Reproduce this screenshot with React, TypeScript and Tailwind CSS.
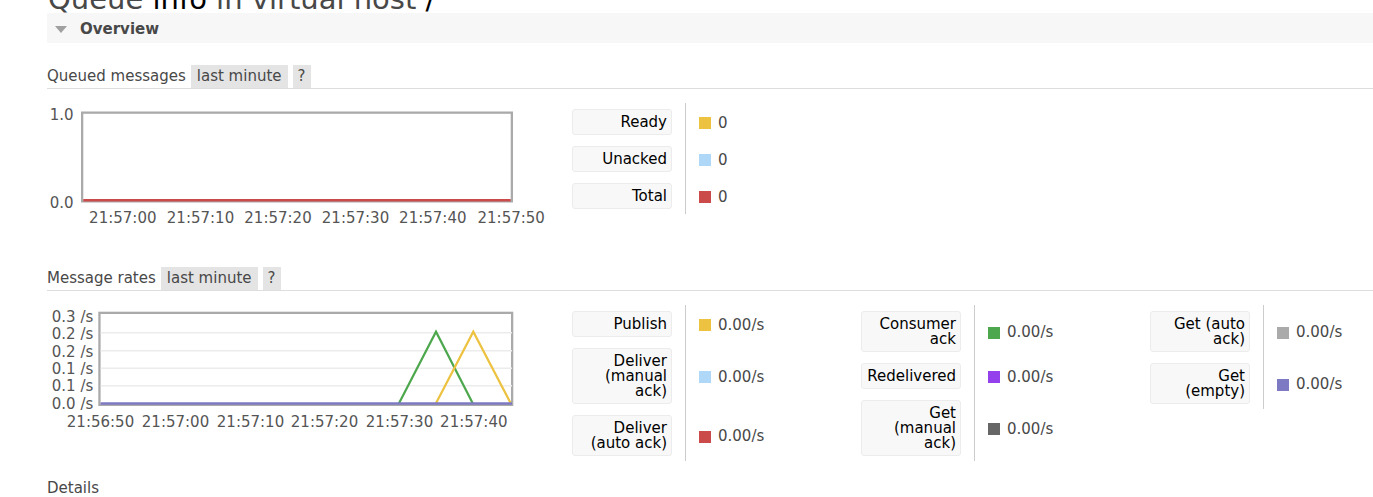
import React from "react";

type Row = { label: string; value: string; sq: string };

function Legend({ rows, className = "" }: { rows: Row[]; className?: string }) {
  return (
    <div className={`grid shrink-0 grid-cols-[100px_1fr] ${className}`}>
      {rows.map((r, i) => (
        <React.Fragment key={i}>
          <div className="py-[5.5px]">
            <div className="rounded-[3px] border border-[#ececec] bg-[#f8f8f8] px-[4px] pb-[3.5px] pt-[5.5px] text-right leading-[15px] text-black">
              {r.label}
            </div>
          </div>
          <div className="ml-[13px] flex items-center gap-[7px] border-l border-[#cccccc] pl-[13px] pt-[3px]">
            <span className={`h-[12px] w-[12px] shrink-0 ${r.sq}`} />
            <span className="whitespace-nowrap">{r.value}</span>
          </div>
        </React.Fragment>
      ))}
    </div>
  );
}

function SectionHeader({ title }: { title: string }) {
  return (
    <div className="flex items-center gap-[5px] border-b border-[#dddddd]">
      <span className="leading-[23px]">{title}</span>
      <span className="bg-[#e4e4e4] px-[6px] leading-[23px]">last minute</span>
      <span className="bg-[#e4e4e4] px-[5px] leading-[23px]">?</span>
    </div>
  );
}

const tickStyle = {
  fontFamily: "'DejaVu Sans', sans-serif",
  fontSize: 15,
  fill: "#555555",
};

function QueuedChart() {
  const xs = [75.8, 153.5, 231, 308.5, 385.8, 464.2];
  const labels = ["21:57:00", "21:57:10", "21:57:20", "21:57:30", "21:57:40", "21:57:50"];
  return (
    <svg width="525" height="126" className="block shrink-0">
      <rect x="35.15" y="9.65" width="429.7" height="88.7" fill="white" stroke="#aaaaaa" strokeWidth="2.3" />
      <line x1="36.3" y1="97.3" x2="463.7" y2="97.3" stroke="#cb4b4b" strokeWidth="2.5" />
      <text x="26.5" y="16.5" textAnchor="end" style={tickStyle}>1.0</text>
      <text x="26.5" y="104.5" textAnchor="end" style={tickStyle}>0.0</text>
      {xs.map((x, i) => (
        <text key={i} x={x} y="119.5" textAnchor="middle" style={tickStyle}>
          {labels[i]}
        </text>
      ))}
    </svg>
  );
}

function RatesChart() {
  const xs = [53.5, 128.5, 203.5, 277.5, 352.5, 426.8];
  const labels = ["21:56:50", "21:57:00", "21:57:10", "21:57:20", "21:57:30", "21:57:40"];
  const yl = [
    ["0.3 /s", 17.1],
    ["0.2 /s", 34],
    ["0.2 /s", 51.5],
    ["0.1 /s", 68.5],
    ["0.1 /s", 86],
    ["0.0 /s", 103.5],
  ] as const;
  const grid = [27.7, 45.7, 63.3, 80.7];
  return (
    <svg width="525" height="126" className="block shrink-0">
      <rect x="52.45" y="7.85" width="412.7" height="92" fill="white" stroke="#aaaaaa" strokeWidth="2.3" />
      {grid.map((y, i) => (
        <line key={i} x1="53.6" y1={y} x2="465" y2={y} stroke="#ececec" strokeWidth="1.5" />
      ))}
      <polyline points="352,98.3 389,26.7 425.7,98.3" fill="none" stroke="#4da74d" strokeWidth="2.2" />
      <polyline points="389,98.3 426.3,26.7 463.7,98.3" fill="none" stroke="#edc240" strokeWidth="2.2" />
      <line x1="53.6" y1="98.5" x2="465" y2="98.5" stroke="#7d7ac3" strokeWidth="2.6" />
      {yl.map(([t, y], i) => (
        <text key={i} x="46.3" y={y} textAnchor="end" style={tickStyle}>
          {t}
        </text>
      ))}
      {xs.map((x, i) => (
        <text key={i} x={x} y="121.5" textAnchor="middle" style={tickStyle}>
          {labels[i]}
        </text>
      ))}
    </svg>
  );
}

export default function App() {
  const queued: Row[] = [
    { label: "Ready", value: "0", sq: "bg-[#edc240]" },
    { label: "Unacked", value: "0", sq: "bg-[#afd8f8]" },
    { label: "Total", value: "0", sq: "bg-[#cb4b4b]" },
  ];
  const rates1: Row[] = [
    { label: "Publish", value: "0.00/s", sq: "bg-[#edc240]" },
    { label: "Deliver (manual ack)", value: "0.00/s", sq: "bg-[#afd8f8]" },
    { label: "Deliver (auto ack)", value: "0.00/s", sq: "bg-[#cb4b4b]" },
  ];
  const rates2: Row[] = [
    { label: "Consumer ack", value: "0.00/s", sq: "bg-[#4da74d]" },
    { label: "Redelivered", value: "0.00/s", sq: "bg-[#9440ed]" },
    { label: "Get (manual ack)", value: "0.00/s", sq: "bg-[#666666]" },
  ];
  const rates3: Row[] = [
    { label: "Get (auto ack)", value: "0.00/s", sq: "bg-[#aaaaaa]" },
    { label: "Get (empty)", value: "0.00/s", sq: "bg-[#7d7ac3]" },
  ];

  return (
    <div className="h-[497px] w-full overflow-hidden bg-white font-['DejaVu_Sans',sans-serif] text-[15px] text-[#484848]">
      <div className="flex flex-col pl-[47px]">
        <h1 className="-mt-[15px] ml-[1px] whitespace-nowrap text-[29px] font-normal leading-[28px] text-[#484848]">
          Queue <span className="text-black">info</span> in virtual host <span className="text-black">/</span>
        </h1>

        <div className="flex h-[30px] items-center gap-[13px] bg-[#f7f7f7] pl-[8px] pt-[2px]">
          <svg width="12" height="7" viewBox="0 0 12 7" className="block shrink-0">
            <polygon points="0,0 12,0 6,7" fill="#a0a0a0" />
          </svg>
          <span className="font-bold text-[#484848]">Overview</span>
        </div>

        <div className="mt-[22px]">
          <SectionHeader title="Queued messages" />
        </div>

        <div className="mt-[14px] flex items-start">
          <QueuedChart />
          <Legend rows={queued} />
        </div>

        <div className="mt-[38px]">
          <SectionHeader title="Message rates" />
        </div>

        <div className="mt-[14px] flex items-start">
          <RatesChart />
          <Legend rows={rates1} className="w-[289px]" />
          <Legend rows={rates2} className="w-[289px]" />
          <Legend rows={rates3} className="w-[240px]" />
        </div>

        <div className="mt-[18px] leading-[18px]">Details</div>
      </div>
    </div>
  );
}
